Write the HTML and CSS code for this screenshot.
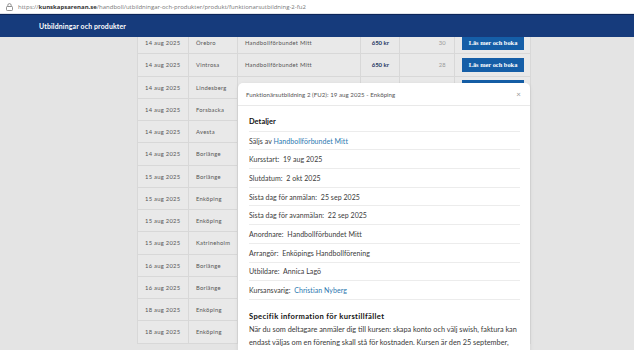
FILE: index.html
```html
<!DOCTYPE html>
<html lang="sv">
<head>
  <meta charset="UTF-8">
  <title>Funktionärsutbildning 2 (FU2)</title>
  <link rel="stylesheet" href="styles.css">
</head>
<body>
  <div class="urlbar">
    <svg class="lock" width="7" height="8" viewBox="0 0 7 8"><rect x="0.5" y="3.5" width="6" height="4" rx="0.8" fill="none" stroke="#777" stroke-width="0.8"/><path d="M1.8 3.5V2.3a1.7 1.7 0 0 1 3.4 0v1.2" fill="none" stroke="#777" stroke-width="0.8"/></svg>
    <span class="url">https://<b>kunskapsarenan.se</b>/handboll/utbildningar-och-produkter/produkt/funktionarsutbildning-2-fu2</span>
  </div>
  <header class="topnav">
    <span class="nav-title">Utbildningar och produkter</span>
  </header>

  <main class="page">
    <table class="events">
      <colgroup>
        <col class="c-date"><col class="c-city"><col class="c-org"><col class="c-price"><col class="c-seats"><col class="c-btn">
      </colgroup>
      <tbody>
        <tr><td>14 aug 2025</td><td>Örebro</td><td>Handbollförbundet Mitt</td><td class="price">650 kr</td><td class="seats">30</td><td><button>Läs mer och boka</button></td></tr>
        <tr><td>14 aug 2025</td><td>Vintrosa</td><td>Handbollförbundet Mitt</td><td class="price">650 kr</td><td class="seats">28</td><td><button>Läs mer och boka</button></td></tr>
        <tr><td>14 aug 2025</td><td>Lindesberg</td><td>Handbollförbundet Mitt</td><td class="price">650 kr</td><td class="seats">30</td><td><button>Läs mer och boka</button></td></tr>
        <tr><td>14 aug 2025</td><td>Forsbacka</td><td>Handbollförbundet Mitt</td><td class="price">650 kr</td><td class="seats">30</td><td><button>Läs mer och boka</button></td></tr>
        <tr><td>14 aug 2025</td><td>Avesta</td><td>Handbollförbundet Mitt</td><td class="price">650 kr</td><td class="seats">30</td><td><button>Läs mer och boka</button></td></tr>
        <tr><td>14 aug 2025</td><td>Borlänge</td><td>Handbollförbundet Mitt</td><td class="price">650 kr</td><td class="seats">30</td><td><button>Läs mer och boka</button></td></tr>
        <tr><td>15 aug 2025</td><td>Borlänge</td><td>Handbollförbundet Mitt</td><td class="price">650 kr</td><td class="seats">30</td><td><button>Läs mer och boka</button></td></tr>
        <tr><td>15 aug 2025</td><td>Enköping</td><td>Handbollförbundet Mitt</td><td class="price">650 kr</td><td class="seats">30</td><td><button>Läs mer och boka</button></td></tr>
        <tr><td>15 aug 2025</td><td>Enköping</td><td>Handbollförbundet Mitt</td><td class="price">650 kr</td><td class="seats">30</td><td><button>Läs mer och boka</button></td></tr>
        <tr><td>15 aug 2025</td><td>Katrineholm</td><td>Handbollförbundet Mitt</td><td class="price">650 kr</td><td class="seats">30</td><td><button>Läs mer och boka</button></td></tr>
        <tr><td>16 aug 2025</td><td>Borlänge</td><td>Handbollförbundet Mitt</td><td class="price">650 kr</td><td class="seats">30</td><td><button>Läs mer och boka</button></td></tr>
        <tr><td>16 aug 2025</td><td>Borlänge</td><td>Handbollförbundet Mitt</td><td class="price">650 kr</td><td class="seats">30</td><td><button>Läs mer och boka</button></td></tr>
        <tr><td>18 aug 2025</td><td>Enköping</td><td>Handbollförbundet Mitt</td><td class="price">650 kr</td><td class="seats">30</td><td><button>Läs mer och boka</button></td></tr>
        <tr><td>18 aug 2025</td><td>Enköping</td><td>Handbollförbundet Mitt</td><td class="price">650 kr</td><td class="seats">30</td><td><button>Läs mer och boka</button></td></tr>
      </tbody>
    </table>

    <div class="modal">
      <div class="modal-head">
        <span>Funktionärsutbildning 2 (FU2): 19 aug 2025 - Enköping</span>
        <span class="close">×</span>
      </div>
      <div class="modal-body">
        <div class="detail-row heading">Detaljer</div>
        <div class="detail-row">Säljs av <a href="#">Handbollförbundet Mitt</a></div>
        <div class="detail-row">Kursstart:&nbsp; 19 aug 2025</div>
        <div class="detail-row">Slutdatum:&nbsp; 2 okt 2025</div>
        <div class="detail-row">Sista dag för anmälan:&nbsp; 25 sep 2025</div>
        <div class="detail-row">Sista dag för avanmälan:&nbsp; 22 sep 2025</div>
        <div class="detail-row">Anordnare:&nbsp; Handbollförbundet Mitt</div>
        <div class="detail-row">Arrangör:&nbsp; Enköpings Handbollförening</div>
        <div class="detail-row">Utbildare:&nbsp; Annica Lagö</div>
        <div class="detail-row">Kursansvarig:&nbsp; <a href="#">Christian Nyberg</a></div>

        <h3 class="info-title">Specifik information för kurstillfället</h3>
        <p class="info-text">När du som deltagare anmäler dig till kursen: skapa konto och välj swish, faktura kan endast väljas om en förening skall stå för kostnaden. Kursen är den 25 september, startdatum ovan är endast när man kan påbörja det digitala materialet.</p>
      </div>
    </div>
  </main>
</body>
</html>
```

FILE: styles.css
```css
html, body { margin: 0; height: 100%; overflow: hidden; }
body { font-family: Lato, "Open Sans", sans-serif; background: #e4e4e4; color: #333; }

.urlbar { height: 13px; background: #fff; display: flex; align-items: center; gap: 5px; padding-left: 6px; border-bottom: 1px solid #dfe3ea; }
.lock { flex: none; }
.url { font-family: "Open Sans", sans-serif; font-size: 6px; color: #777; white-space: nowrap; }
.url b { color: #333; font-weight: 700; }

.topnav { position: relative; z-index: 2; height: 22px; background: #163b7c; border-top: 1px solid #0c2558; display: flex; align-items: center; padding-left: 39px; }
.nav-title { color: #fff; font-weight: 700; font-size: 6.9px; letter-spacing: 0.15px; }

.page { position: relative; margin-top: -6px; padding-left: 137px; }

.events { border-collapse: collapse; table-layout: fixed; width: 393px; background: #e9e9e9; font-size: 5.8px; letter-spacing: 0.28px; color: #555; }
.c-date { width: 51px; }
.c-city { width: 49px; }
.c-org { width: 123px; }
.c-price { width: 39px; }
.c-seats { width: 55px; }
.c-btn { width: 76px; }
.events td { height: 22.25px; padding: 0 0 0 7px; border: 1px solid #d8d8d8; white-space: nowrap; box-sizing: border-box; }
.events td.price { text-align: right; padding: 0 10px 0 0; font-weight: 700; color: #1d3563; letter-spacing: 0; font-size: 6px; }
.events td.seats { text-align: right; padding: 0 8px 0 0; color: #9a9a9a; }
.events button { display: block; width: 62px; height: 14px; padding: 0; border: none; background: #155ea7; color: #fff; font-family: "Liberation Serif", serif; font-weight: 700; font-size: 6.4px; letter-spacing: 0; }

.modal { position: absolute; left: 238px; top: 52px; width: 292px; height: 320px; background: #fff; border-radius: 5px; box-shadow: 0 1px 4px rgba(0,0,0,0.08); }
.modal-head { height: 22px; display: flex; align-items: center; justify-content: space-between; padding: 0 9px 0 8px; border-bottom: 1px solid #e9e9e9; font-size: 6.1px; letter-spacing: 0.05px; color: #555; }
.close { font-size: 8px; color: #9a9a9a; letter-spacing: 0; }
.modal-body { padding: 7px 10px 0 11px; }
.detail-row { height: 18.7px; box-sizing: border-box; display: flex; align-items: center; border-bottom: 1px solid #ececec; font-size: 7px; letter-spacing: 0.05px; color: #3a3a3a; white-space: pre; }
.detail-row a { color: #2a78b0; text-decoration: none; }
.detail-row.heading { font-weight: 700; color: #111; font-size: 7.4px; }
.info-title { margin: 11px 0 2px; font-size: 7.6px; line-height: 10px; letter-spacing: 0.35px; color: #111; }
.info-text { margin: 0; font-size: 7.3px; line-height: 13px; color: #3a3a3a; }
```
